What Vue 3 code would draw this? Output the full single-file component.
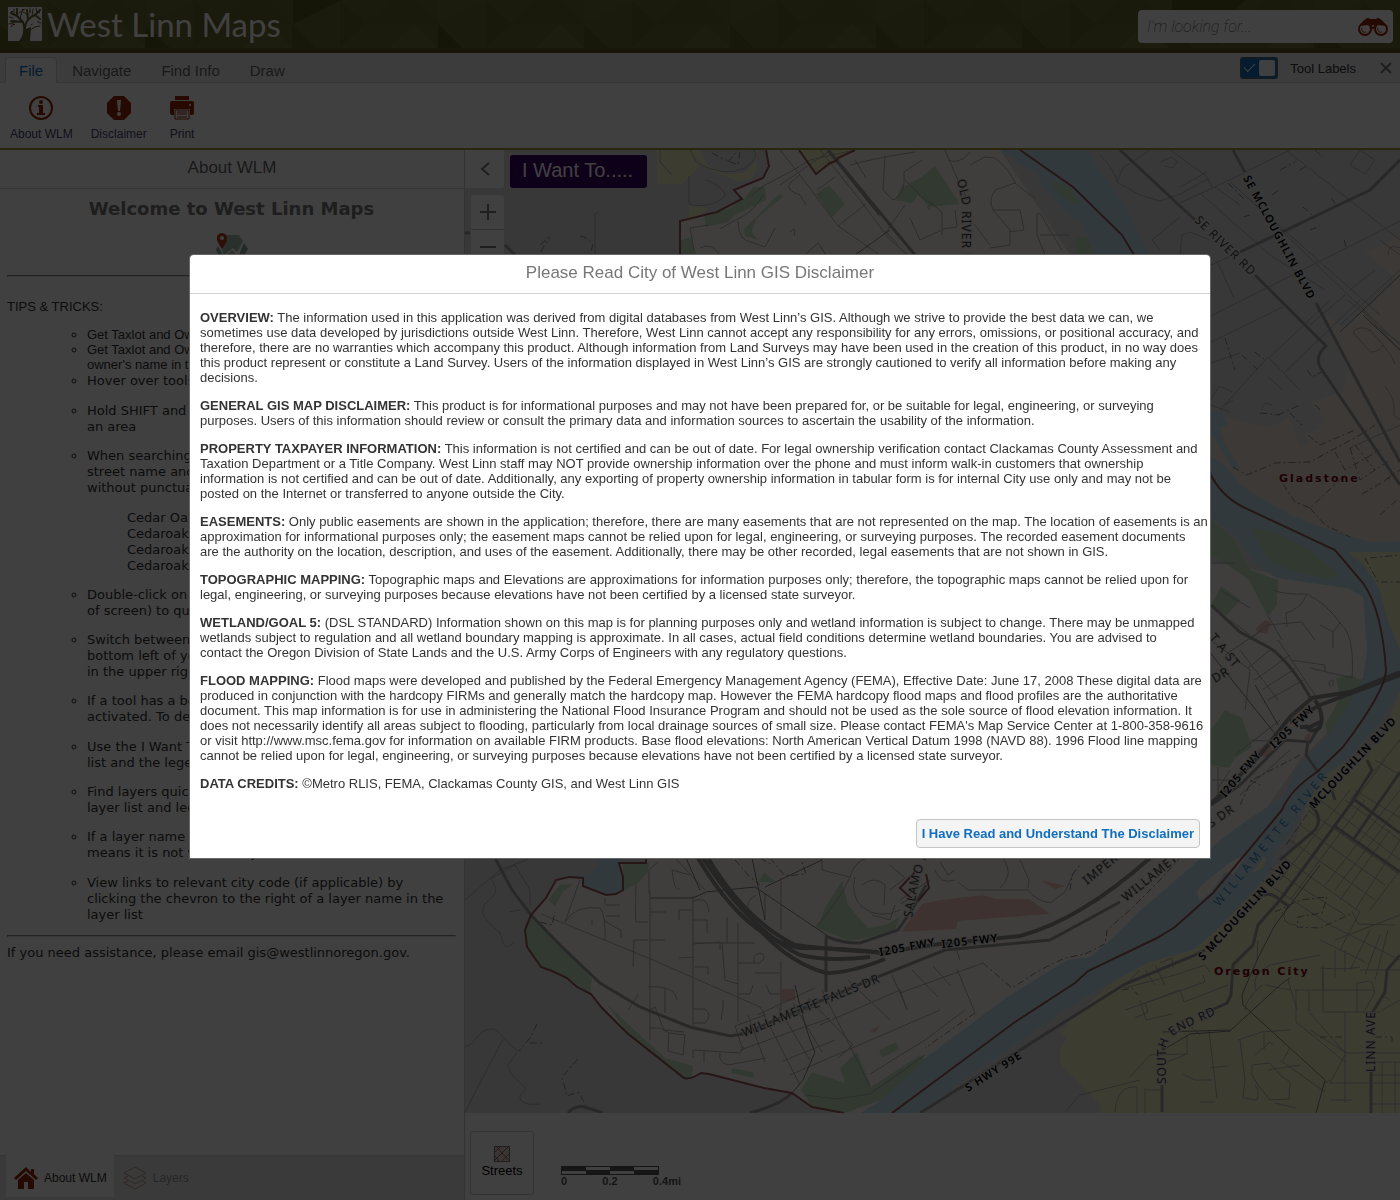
<script setup>
  import { ref } from 'vue'

  const searchText = ref('');
  const showLabels = ref(true);
  const showDisclaimer = ref(true);
  const activeTab = ref('File');

  const tabs = ['File', 'Navigate', 'Find Info', 'Draw'];

  // --------------> SIDE PANEL

  const tips = [
    {text: "Get Taxlot and Owner info", plain: true},
    {text: "Get Taxlot and Owner info by\nowner's name in the search", plain: true},
    {text: "Hover over tools for help", first: true},
    {text: "Hold SHIFT and drag to zoom\nan area", wide: true},
    {
      text: "When searching, use the\nstreet name and number\nwithout punctuation",
      examples: ["Cedar Oak", "Cedaroak", "Cedaroak Dr", "Cedaroak Drive"],
    },
    {text: "Double-click on the map (top\nof screen) to query"},
    {text: "Switch between tabs at the\nbottom left of your screen\nin the upper right"},
    {text: "If a tool has a border it is\nactivated. To deselect, click"},
    {text: "Use the I Want To menu for the layer\nlist and the legend", wide: true},
    {text: "Find layers quickly with the\nlayer list and legend"},
    {text: "If a layer name is gray, this\nmeans it is not visible at your scale"},
    {text: "View links to relevant city code (if applicable) by\nclicking the chevron to the right of a layer name in the\nlayer list", wide: true},
  ];

  // --------------> DISCLAIMER

  const sections = [
    {title: "OVERVIEW:", text: "The information used in this application was derived from digital databases from West Linn’s GIS. Although we strive to provide the best data we can, we sometimes use data developed by jurisdictions outside West Linn. Therefore, West Linn cannot accept any responsibility for any errors, omissions, or positional accuracy, and therefore, there are no warranties which accompany this product. Although information from Land Surveys may have been used in the creation of this product, in no way does this product represent or constitute a Land Survey. Users of the information displayed in West Linn’s GIS are strongly cautioned to verify all information before making any decisions."},
    {title: "GENERAL GIS MAP DISCLAIMER:", text: "This product is for informational purposes and may not have been prepared for, or be suitable for legal, engineering, or surveying\npurposes. Users of this information should review or consult the primary data and information sources to ascertain the usability of the information."},
    {title: "PROPERTY TAXPAYER INFORMATION:", text: "This information is not certified and can be out of date. For legal ownership verification contact Clackamas County Assessment and Taxation Department or a Title Company. West Linn staff may NOT provide ownership information over the phone and must inform walk-in customers that ownership\ninformation is not certified and can be out of date. Additionally, any exporting of property ownership information in tabular form is for internal City use only and may not be\nposted on the Internet or transferred to anyone outside the City."},
    {title: "EASEMENTS:", text: "Only public easements are shown in the application; therefore, there are many easements that are not represented on the map. The location of easements is an approximation for informational purposes only; the easement maps cannot be relied upon for legal, engineering, or surveying purposes. The recorded easement documents\nare the authority on the location, description, and uses of the easement. Additionally, there may be other recorded, legal easements that are not shown in GIS."},
    {title: "TOPOGRAPHIC MAPPING:", text: "Topographic maps and Elevations are approximations for information purposes only; therefore, the topographic maps cannot be relied upon for legal, engineering, or surveying purposes because elevations have not been certified by a licensed state surveyor."},
    {title: "WETLAND/GOAL 5:", text: "(DSL STANDARD) Information shown on this map is for planning purposes only and wetland information is subject to change. There may be unmapped wetlands subject to regulation and all wetland boundary mapping is approximate. In all cases, actual field conditions determine wetland boundaries. You are advised to\ncontact the Oregon Division of State Lands and the U.S. Army Corps of Engineers with any regulatory questions."},
    {title: "FLOOD MAPPING:", text: "Flood maps were developed and published by the Federal Emergency Management Agency (FEMA), Effective Date: June 17, 2008 These digital data are produced in conjunction with the hardcopy FIRMs and generally match the hardcopy map. However the FEMA hardcopy flood maps and flood profiles are the authoritative document. This map information is for use in administering the National Flood Insurance Program and should not be used as the sole source of flood elevation information. It does not necessarily identify all areas subject to flooding, particularly from local drainage sources of small size. Please contact FEMA's Map Service Center at 1-800-358-9616 or visit http://www.msc.fema.gov for information on available FIRM products. Base flood elevations: North American Vertical Datum 1998 (NAVD 88). 1996 Flood line mapping cannot be relied upon for legal, engineering, or surveying purposes because elevations have not been certified by a licensed state surveyor."},
    {title: "DATA CREDITS:", text: "©Metro RLIS, FEMA, Clackamas County GIS, and West Linn GIS"},
  ];

  // --------------> MAP

  const areas = [
    {kind: "city", d: "M766 150L769 166 763 178 734 190 742 199 717 212 680 221V600L646 858V863H619L623 877V890L606 895 583 886V878L569 877 556 880 546 898 531 915 525 930 527 947 541 967 567 978 591 994 627 1033 684 1078 692 1078 701 1073 764 1088 792 1093 812 1107 844 1113H880L1230 860 1300 760 1370 690 1367 590 1200 560 1100 300 1000 150Z"},
    {kind: "gladstone", d: "M1400 237L1365 252 1397 280 1367 310 1343 327 1323 313 1337 340 1347 367 1343 390 1310 404 1325 418 1318 430 1305 434 1308 445 1300 447 1290 417 1270 427 1247 423 1210 413V500L1400 552Z"},
    {kind: "oregon", d: "M1400 690L1382 740 1350 760 1328 773 1307 803 1293 850 1217 930 1193 950 1147 955 1120 975 1060 1031 1067 1038 1060 1050V1063L1102 1107 1100 1113H1400Z"},
    {kind: "oregon", d: "M682 150H694L700 166 682 184H657V150ZM692 150H757V168L752 178 740 182 726 176 705 168Z"},
    {kind: "oregon", d: "M690 206L708 208 703 214 688 218ZM800 150H850L838 162 817 173Z"},
    {kind: "city", d: "M700 150H756L757 162 744 173 727 174 708 166Z", cls: "gray"},
    {kind: "water", d: "M1000 150L1035 172 1043 188 1058 205 1070 216 1082 222 1096 255 1140 400 1210 517 1235 535 1256 565 1277 578 1310 583 1347 588 1363 597 1367 650 1363 677 1343 713 1327 737 1297 767 1283 797 1250 818 1220 840 1193 865 1143 908 1107 943 1090 957 1067 960 1007 997 925 1058 881 1100 861 1113H920L967 1077 1023 1040 1060 1013 1097 990 1120 978 1147 963 1193 950 1217 930 1257 887 1272 868 1274 852 1293 830 1307 803 1328 773 1350 757 1382 720 1400 690V541L1370 542 1330 530 1290 515 1240 485 1225 465 1210 455 1150 254 1137 231 1127 208 1113 188 1097 168 1087 150Z"},
    {kind: "oregon", d: "M1348 552H1400V650L1388 620 1380 590 1365 566Z"},
    {kind: "water", d: "M1210 413L1222 413 1228 424 1220 428 1225 445 1240 467 1233 470 1210 430Z"},
    {kind: "water", d: "M556 880L569 877 583 878V886L606 895 616 894 623 889 619 863 622 858H592L598 866 588 874Z"},
    {kind: "park", d: "M1250 527L1275 532 1310 550 1340 575 1325 579 1290 570 1270 561Z"},
    {kind: "park", d: "M1050 180L1068 186 1082 203 1075 205 1058 194ZM1074 237H1087L1096 255H1077Z"},
    {kind: "park", d: "M1210 518L1235 540 1250 570 1278 580 1277 605 1268 617 1249 580 1238 572 1210 553Z"},
    {kind: "park", d: "M1221 586L1241 600 1226 616 1211 605ZM1210 731L1225 710 1242 718 1252 747 1235 758 1229 768 1210 765Z"},
    {kind: "park", d: "M1336 678L1350 675 1362 680 1345 712 1328 737 1325 725 1340 698Z"},
    {kind: "park", d: "M704 217L730 208 745 198 753 187 765 187 766 200 735 215 728 222 706 227ZM780 193L783 197 756 219 752 232 758 240 745 236 744 229Z"},
    {kind: "park", d: "M829 185L845 204 832 217 816 194ZM895 200L901 188 920 178 935 166 960 204 930 207 918 195 912 203ZM681 240L690 237 697 255H681Z"},
    {kind: "park", d: "M531 915L560 945 592 979 590 993 567 978 541 967 527 947 525 930ZM623 864L649 863 648 872 637 884 622 892Z"},
    {kind: "park", d: "M548 900L560 885 573 884 563 892 555 906ZM606 1003L640 1035 665 1058 693 1066 692 1078 684 1078 627 1033Z"},
    {kind: "park", d: "M842 881L848 905 868 928 885 925 900 917 895 930 870 937 850 941 817 928 826 906ZM758 882L764 872 776 882Z"},
    {kind: "park", d: "M801 1090L812 1072 845 1083 840 1068 857 1052 871 1087 920 1055 926 1060 881 1100 845 1113 812 1107ZM879 1050L896 1042 899 1049 882 1058ZM732 1068L753 1072 755 1078 731 1073Z"},
    {kind: "red", d: "M901 932L922 904 940 900 982 895 996 899H1030L1036 904 1050 914 958 921 956 929ZM1255 752L1270 740 1272 752 1268 759 1257 753Z"},
    {kind: "red", d: "M782 989H795V1000L782 1002ZM1256 628L1265 620 1271 623 1267 634 1257 632ZM1306 735L1311 732 1309 740 1304 740ZM870 1031L880 1025 875 1033ZM1040 880L1066 886 1055 889Z"},
    {kind: "city", d: "M1197 892L1202 885 1228 864 1238 858 1245 858 1233 874 1225 872 1212 891 1200 901Z"},
    {kind: "oregon", d: "M1252 873L1263 858 1266 858 1264 867Z"},
  ];

  const minorRoads = [
    // hills west of the city
    "M465 900L500 870 531 858", "M490 877C500 893 496 893 485 904C478 918 490 922 500 933C504 945 505 952 514 942M509 912L520 910",
    "M492 878L515 865 530 890V906", "M465 1047C475 1045 478 1030 490 1029C500 1028 500 1038 518 1051L508 1065C510 1080 528 1085 525 1090C515 1098 520 1106 540 1104",
    "M503 1039L465 1112", "M595 255V214L598 212",
    // north side
    "M690 150L697 163Q725 178 745 168Q760 158 754 150", "M660 150V162L672 175M705 180C715 182 725 190 725 196C718 204 700 208 689 204V176",
    "M708 225L690 228 694 250M720 229Q735 220 740 218Q755 210 763 195M738 221Q738 235 745 240L765 247",
    "M750 197L763 186L790 172 810 160 855 150", "M780 150L800 175 838 226 880 255", "M800 175L790 183Q785 190 800 195L806 205",
    "M820 150L860 200 890 240 908 255", "M780 185L828 152M817 190L835 177M838 226L866 204M850 165Q880 157 915 152",
    "M855 160L866 178M885 155L883 190L893 200Q906 195 904 172L922 160",
    "M930 210Q925 206 932 204L942 212V235M905 205L886 232 898 245M910 218L920 240 942 230M765 247L775 228",
    "M700 248Q712 242 720 255M790 232Q797 225 794 236M805 255L818 243 826 255",
    "M905 180Q920 195 925 200L935 205M955 210L957 227 942 229",
    "M945 150L960 185 968 200M948 160Q960 165 970 152M970 165L985 157 995 158Q1010 170 1015 183M1015 183L995 190Q988 200 993 210L1010 230V245L990 248M993 210L1020 210 1024 230 1009 232M1015 183L1030 195 1036 198M1037 214Q1040 210 1045 222L1062 250M1040 235H1070M1037 214V235L1045 255M975 225L990 245",
    "M1100 155Q1115 170 1117 182L1140 195 1160 201 1180 194 1210 178M1117 182L1123 168 1150 150M1207 172L1180 187M1180 203L1215 187 1300 145",
    "M1160 162L1172 157 1178 162 1172 168 1164 166M1170 150L1205 175 1213 188M1286 150L1400 240M1200 193L1270 255M1350 165L1360 150 1375 160 1365 174ZM1215 187L1240 205",
    "M1160 250L1152 240 1180 217M1180 255L1182 235 1190 232 1210 240",
    // Gladstone
    "M1211 316L1400 221M1211 342L1283 307M1218 263L1234 298M1211 265L1300 225M1250 200L1400 345M1230 182L1380 315M1270 255L1325 290M1285 372L1360 300M1270 357L1330 300M1220 410L1268 357M1211 400L1219 386 1232 392M1268 357L1300 390M1225 405L1233 400M1262 410Q1262 400 1272 405",
    "M1211 363L1240 353M1268 377L1283 390M1211 405L1230 412M1310 325L1345 295M1400 270L1340 325M1350 290L1375 270M1348 300L1362 312M1353 332Q1358 325 1370 330L1383 345Q1380 352 1370 352Z M1383 345Q1392 355 1395 364M1400 425L1350 448M1385 386Q1396 400 1394 415L1400 420",
    "M1388 255Q1388 243 1400 248M1380 240L1400 255M1362 310L1400 350M1375 325L1400 343",
    // east city streets
    "M1211 563H1234M1273 590Q1285 595 1307 594Q1328 605 1340 623Q1355 635 1352 678L1310 668M1307 594Q1300 610 1286 613L1287 627M1250 640L1267 625 1302 622 1315 640M1320 625L1333 632 1340 623M1333 632V648M1211 640L1250 670 1245 710M1220 590L1250 608M1230 620L1250 635M1268 616L1282 640",
    "M1240 650L1278 700M1225 655L1262 630M1248 668L1270 650M1255 680L1290 655M1262 690L1296 668M1268 700L1303 680M1278 640L1315 695M1290 660L1325 665V672M1330 687Q1327 680 1333 680V686",
    "M1218 767V795M1230 770L1217 790M1212 780H1240M1235 755L1280 720M1250 740L1285 742M1240 795L1290 750",
    // Willamette neighbourhood
    "M541 914L585 932 653 960 760 1007 765 1015 735 1026", "M565 922Q575 905 600 908Q606 915 605 940M604 920Q615 928 621 930V938M605 905V898M606 905H620M606 916H620M565 922L580 880M592 925V920",
    "M650 890V1040M693 896V1025M738 923V1022M781 961V1010M650 912H666M679 958L693 957M693 944L720 942V950M650 940H665M694 943L755 943M738 963H760Q768 955 760 953Q752 955 754 963M755 973H780M738 994H750L753 985M781 994H770L766 985M722 943L725 980 738 984M727 943V917M693 920H707V933M679 920V910H692M636 885Q635 920 636 922H648M649 894V870L658 862M693 901Q708 895 709 912M695 967H708V975M648 987Q675 985 677 1000M665 988V1013M650 1010L655 1007 664 1030 684 1032M669 1033L685 1035 683 1055 668 1051ZM693 1009H705Q713 1015 705 1023H694M649 1028H660L669 1033M693 1050L740 1053 744 1047M693 1058V1050M704 1050V1063M720 1053Q718 1062 728 1065L766 1058M721 1020L723 1007V1000M628 1010L638 995M634 940H648M634 940L633 967",
    "M765 893V920M756 895Q745 900 748 915M672 870Q675 895 680 888M672 870L690 875M675 858L705 890",
    "M781 878V930M822 858V870L850 877M850 877Q840 900 815 928M850 877Q855 860 868 858M855 877Q850 895 862 907Q880 920 900 910M862 885Q875 875 885 885L884 905M890 890L905 878 890 865M872 915L890 920 895 905",
    // Willamette Falls grid
    "M735 1026L743 1050M748 1015L765 1062M763 1013L800 1085M778 1007L810 1060M793 1003L822 1052M808 998L853 1045L838 1058M822 990L870 1086M848 980L890 1020M892 975L907 1009M912 970L938 997M933 966L950 985",
    "M735 1035L820 1005M740 1050L830 1018M783 1061L835 1040M790 1075L940 1010M820 1025L900 990M870 1074L925 1040 965 1010M805 1095L836 1099 870 1094 925 1055M757 1015L815 988",
    "M975 1013L957 969M955 945L960 960M900 993L983 963M900 990L907 1010",
    "M900 900L930 880M958 882L968 890H1028Q1035 900 1050 903M1003 858Q1015 875 1000 888M1020 860L1029 880 1028 888M940 862L948 875 955 870M1050 903L1065 892M935 870Q940 885 955 880M1065 892L1075 870M913 896L901 904",
    "M1065 1112L1080 1095 1140 1080",
    // Oregon City grid
    "M1320 800L1400 860M1310 812L1400 875M1300 825L1385 885M1290 840L1375 900M1280 855L1360 912M1270 868L1345 915M1262 880L1330 925M1355 790L1400 818M1345 800L1400 840M1375 760L1400 775",
    "M1400 790L1325 885M1400 805L1335 890M1400 740L1350 800M1400 840L1355 910M1385 760L1310 860M1390 830L1340 900M1365 800L1290 900M1350 790L1280 880M1400 870L1370 910",
    "M1285 910Q1280 925 1297 925M1352 911L1358 924 1395 925M1330 925L1400 960M1340 950L1360 912M1320 940L1365 962M1350 970L1370 930M1365 975L1380 935M1375 980L1388 930M1335 940L1400 915",
    "M1124 988L1175 975 1205 965 1210 972M1145 970L1155 985M1155 965L1165 985M1160 963L1172 958 1173 968M1130 980L1140 970M1125 1010L1205 982 1203 975M1135 1018L1148 1012 1145 1003 1180 990 1184 1002 1228 985M1140 1000L1146 1020 1172 1014",
    "M1323 990V967M1323 965V1012H1380M1335 950V978M1345 950V972M1360 970H1400M1320 968Q1345 970 1360 967M1296 1012V1022L1345 1062M1310 1013L1345 1053V1103M1295 990H1375M1309 991V1012M1357 1012V983L1370 981Q1378 990 1372 998L1365 1010M1345 1053H1400M1345 1012V1053M1330 1083L1345 1055M1265 985L1290 990M1296 1012V990",
    "M1238 1040L1262 1032 1290 1030M1240 1040L1245 1080 1243 1098 1257 1100Q1260 1090 1255 1085M1264 1033V1050M1252 1075V1065L1270 1063 1280 1075 1290 1082 1289 1099 1270 1100 1258 1085ZM1255 1055L1270 1042 1273 1045M1268 1070L1300 1065M1280 1060L1325 1092M1290 1048L1283 1060M1209 1031L1217 1098M1210 1068L1228 1066M1183 1074L1195 1080H1212M1200 1102H1215M1296 1108L1275 1103M1115 1112Q1117 1085 1137 1087V1113M1145 1088V1113M1145 1090H1161M1325 1083L1330 1080M1130 1077L1150 1055 1187 1054V1035M1165 1063L1187 1054M1330 1100H1352M1200 1035L1190 1026",
    "M1382 1062V1113M1395 1062V1113M1370 1062H1400M1370 1075H1400M1370 1104H1400M1390 1000Q1380 990 1373 1012M1382 1010L1400 1000M1330 1083H1400M1310 1030L1345 1052",
    "M1256 990Q1250 975 1270 965L1320 955M1257 960L1258 940M1262 985Q1245 1000 1245 1010M1288 980L1297 1010",
  ];

  const dashedRoads = [
    "M540 245L550 236M580 236Q595 240 592 248L590 255M541 252Q545 243 550 238", "M537 1024L530 1038 519 1051M530 1043H543M578 1059L562 1077 567 1096 578 1092 586 1105",
    "M540 922L552 925 555 912", "M712 153L725 160M740 152L738 165 726 160M728 162L738 150", "M1233 467L1247 475 1275 463 1310 462 1360 435 1375 425M1290 413L1302 425M1308 435L1320 445 1355 430M1335 452L1345 470 1380 450M1283 484L1295 502 1310 508 1345 475M1310 508L1325 525 1350 537M1385 480L1400 470M1362 494L1390 478M1380 515L1397 500",
    "M1225 338L1235 370M1242 355L1258 370M1255 352L1265 360M1307 370L1312 377 1325 370M1315 405L1322 412M1260 413L1280 415M1278 415L1300 405", "M1365 558L1378 582 1400 582M1370 558L1400 555M1350 448L1360 480 1390 460M1355 445L1375 470",
    "M1240 805L1252 780 1300 755M1250 780L1260 785M1286 845L1310 810", "M735 860L748 875 760 885M770 858L785 876 806 874 802 862M760 858L772 865",
    "M983 963L1012 988 1040 970 1065 958 1085 954 1105 944 1107 930 1130 910 1160 880 1180 858", "M1070 890L1072 875 1080 865M975 1013L925 1048",
    "M1275 912L1300 900 1327 897 1322 913 1298 917 1297 927 1320 928 1353 913", "M1122 990L1132 988 1138 995M1320 1037H1345M1375 1037H1392V1042M1290 905L1280 915",
    "M1280 170L1295 162M1228 183L1245 200M1250 215L1240 218M1300 170L1308 165M1272 195L1279 190M1303 207L1312 215M1331 198L1337 206M1315 150L1323 157M1310 230L1320 226M1344 240L1347 250",
  ];

  const mediumRoads = [
    "M650 898H693L706 892 755 887 828 936", "M765 920L752 858M700 890L686 858", "M1200 640L1280 740M1255 685L1278 725", "M795 985Q805 1030 815 1052L803 1080 792 1093",
    "M1163 1032L1231 1030 1280 985 1290 978M1243 1005L1325 1080 1316 1113M1242 995Q1250 975 1262 950L1275 925 1320 865M1243 1005L1242 995", "M822 860L765 887M855 255L890 230M1340 332L1400 275M1363 315L1400 350", "M1163 1050L1190 1034 1231 1031",
  ];

  const majorRoads = [
    "M495 858L512 890 531 915 560 945 600 983 640 1007 690 1027 730 1036 743 1034", "M828 150L830 152L915 255M828 150L880 215",
    "M1120 150L1195 220M1255 275L1326 346Q1315 355 1320 367L1400 485", "M1233 150L1245 172M1316 303L1400 462", "M1240 252L1370 190 1400 160",
    "M743 1034L870 980 945 950 1050 940 1120 902", "M920 1113L1125 984 1193 956 1205 950", "M825 936Q845 944 860 943L898 930 915 905 926 885", "M826 938V992",
    "M1162 1112V1085M1163 1050V1040M1205 1013L1227 1003 1231 995 1233 965 1253 945 1258 925 1280 900 1350 805 1372 770 1367 760M1280 860L1315 830Q1322 820 1315 810L1310 805M1355 800L1400 833M1333 825L1400 872M1353 840L1400 772M1258 897Q1270 890 1280 900L1290 907",
    "M1371 1113V1070M1371 1015L1385 992 1387 970 1400 955", "M1211 605L1240 632 1270 648Q1290 662 1310 697", "M1211 805L1240 785 1270 755 1285 740 1310 742 1320 725M1308 742L1306 755 1318 772M1335 800L1330 785M465 233H470M505 245L515 255M568 1113Q575 1105 585 1107L603 1113M750 1113Q780 1105 792 1093",
  ];

  const highways = [
    "M698 858Q745 938 800 948Q850 948 880 953L940 944 1020 936Q1080 920 1150 858",
    "M703 858Q750 930 800 955Q830 962 870 957", "M708 858Q745 920 795 945Q845 951 878 952", "M760 930Q790 963 826 973Q850 973 885 959",
    "M1211 804L1260 755 1290 717 1312 698 1350 692 1400 672", "M1290 722L1320 705 1400 675M1300 727H1310L1320 722M1315 700Q1325 715 1320 727 1312 735 1305 725",
  ];

  const roadLabels = [
    {id: "r1", d: "M1243 178L1325 330", text: "SE MCLOUGHLIN BLVD", dark: true},
    {id: "r2", d: "M1194 221L1262 287", text: "SE RIVER RD"},
    {id: "r3", d: "M957 180L962 202 962 290", text: "OLD RIVER DR"},
    {id: "r4", d: "M1209 638L1244 680", text: "T A ST"},
    {id: "r5", d: "M1215 683L1250 662", text: "DR"},
    {id: "r6", d: "M1274 749L1325 701", text: "I205 FWY", dark: true},
    {id: "r7", d: "M1225 798L1274 741", text: "I205 FWY", dark: true},
    {id: "r8", d: "M1211 828L1250 800", text: "S DR"},
    {id: "r9", d: "M1314 809L1420 697", text: "MCLOUGHLIN BLVD", dark: true},
    {id: "r10", d: "M1203 961L1305 850", text: "S MCLOUGHLIN BLVD", dark: true},
    {id: "r11", d: "M880 956L950 943", text: "I205 FWY", dark: true},
    {id: "r12", d: "M942 948L1012 940", text: "I205 FWY", dark: true},
    {id: "r13", d: "M744 1037L890 978", text: "WILLAMETTE FALLS DR"},
    {id: "r14", d: "M912 918L919 880 938 820", text: "SALAMO RD"},
    {id: "r15", d: "M1087 885L1155 830", text: "IMPERIAL"},
    {id: "r16", d: "M1126 902L1210 834", text: "WILLAMETTE"},
    {id: "r17", d: "M968 1092L1036 1049", text: "S HWY 99E", dark: true},
    {id: "r18", d: "M1166 1084V1050Q1167 1038 1180 1031L1225 1010", text: "SOUTH END RD"},
    {id: "r19", d: "M1375 1072V1000", text: "LINN AVE"},
  ];
</script>

<template>
  <div class="viewer">
    <header class="banner">
      <svg class="bannerPattern" aria-hidden="true">
        <defs>
          <pattern id="tri" width="146" height="48" patternUnits="userSpaceOnUse">
            <rect width="146" height="48" fill="#686b32" />
            <path d="M0 0H48L0 24Z" fill="#6c7036" />
            <path d="M48 0L73 24 48 48Z" fill="#62652e" />
            <path d="M73 24L98 0H122L146 24Z" fill="#64672f" />
            <path d="M98 48L122 24 146 48Z" fill="#707438" />
            <path d="M0 24L24 48H0Z" fill="#5e612b" />
          </pattern>
        </defs>
        <rect width="100%" height="100%" fill="url(#tri)" />
        <path d="M293 0H341L293 24ZM438 24L462 48H438ZM145 30L170 48H145ZM1172 0H1245L1220 24H1172ZM1318 24L1342 48H1318Z" fill="#545722" />
      </svg>
      <div class="brand">
        <svg class="brandLogo" viewBox="0 0 34 34" aria-hidden="true">
          <rect width="34" height="34" fill="#fff" />
          <g fill="none" stroke="#626630" stroke-linecap="round">
            <path d="M14 34C17 26 17 20 15 15L9 9M15 15L3 14M17 20C18 14 20 11 27 8M20 13L19 3M9 9L9 2M9 9L3 6M27 8L32 3M27 8L32 12" stroke-width="2" />
            <path d="M20 34C20 25 22 20 32 19M12 12L14 4M6 14L3 20M15 5L21 8M24 9L25 2M23 18L28 14 33 16M6 7L6 2M11 6L17 2M29 6L28 1M1 10L5 11M1 17L8 15M22 6L22 1" stroke-width="1" />
          </g>
          <path d="M11 34C16 28 16 23 15 17L18 19V34ZM18 34V22L23 20 22 34Z" fill="#626630" />
          <path d="M3 4h2v1h-2zM14 2h2v1h-2zM8 6h2v1h-2zM21 4h2v1h-2zM30 5h2v1h-2zM5 17h2v1h-2z" fill="#c02040" />
          <circle cx="26" cy="14" r="3" fill="#fff" />
        </svg>
        <span class="brandName">West Linn Maps</span>
      </div>
      <form class="search" @submit.prevent>
        <input v-model="searchText" type="text" placeholder="I'm looking for..." aria-label="Search" />
        <button type="submit" aria-label="Find">
          <svg width="30" height="20" viewBox="0 0 30 20">
            <path d="M2 9Q5 3 8 2Q10 0 12 2H18Q20 0 22 2Q25 3 28 9L20 8 17 7H13L10 8Z" fill="#962808" />
            <g fill="none" stroke="#962808" stroke-width="2">
              <circle cx="7" cy="12" r="6" /><circle cx="23" cy="12" r="6" />
              <path d="M4 11A3 3 0 0 0 8 15M20 11A3 3 0 0 0 24 15" stroke-width="1" />
            </g>
            <circle cx="15" cy="9" r="3" fill="#962808" /><circle cx="15" cy="9" r="1" fill="#fff" />
          </svg>
        </button>
      </form>
    </header>

    <nav class="tabs">
      <button v-for="tab in tabs" :key="tab" type="button" class="tab" :class="{ active: tab === activeTab }" @click="activeTab = tab">
        {{ tab }}
      </button>
      <label class="labelToggle">
        <input v-model="showLabels" type="checkbox" />
        Tool Labels
      </label>
      <button type="button" class="closeBtn" aria-label="Close toolbar">
        <svg width="12" height="12" viewBox="0 0 12 12"><path d="M1 1L11 11M11 1L1 11" stroke="#777" stroke-width="2" /></svg>
      </button>
    </nav>

    <div class="toolbar">
      <button type="button" class="tool">
        <svg width="24" height="24" viewBox="0 0 24 24">
          <circle cx="12" cy="12" r="11" fill="none" stroke="#962808" stroke-width="2" />
          <circle cx="12" cy="6" r="2" fill="#962808" />
          <path d="M9 9H14V17H16V19H8V17H10V11H9Z" fill="#962808" />
        </svg>
        <span v-if="showLabels">About WLM</span>
      </button>
      <button type="button" class="tool" @click="showDisclaimer = true">
        <svg width="24" height="24" viewBox="0 0 24 24">
          <path d="M7 0H17L24 7V17L17 24H7L0 17V7Z" fill="#962808" />
          <path d="M10 4H14L13 15H11Z" fill="#fff" /><circle cx="12" cy="18" r="2" fill="#fff" />
        </svg>
        <span v-if="showLabels">Disclaimer</span>
      </button>
      <button type="button" class="tool">
        <svg width="24" height="24" viewBox="0 0 24 24">
          <path d="M5 0H19V4H5ZM2 5H22Q24 5 24 7V17Q24 19 22 19H20V13H4V19H2Q0 19 0 17V7Q0 5 2 5Z" fill="#962808" />
          <path d="M5 14H19V23H5Z" fill="#fff" stroke="#962808" stroke-width="1" />
          <path d="M7 16H17M7 18H17M7 21H17" stroke="#962808" stroke-width="1" />
          <circle cx="20" cy="9" r="1" fill="#fff" />
        </svg>
        <span v-if="showLabels">Print</span>
      </button>
    </div>

    <main class="workspace">
      <aside class="panel">
        <h2 class="panelTitle">About WLM</h2>
        <div class="panelBody">
          <h1>Welcome to West Linn Maps</h1>
          <svg class="welcomeIcon" width="32" height="32" viewBox="0 0 32 32" aria-hidden="true">
            <path d="M10 2H23L27 8 21 19 17 15 12 19 8 22 6 17Z" fill="#a8c0b0" />
            <path d="M28 10L32 16 25 29H20ZM2 13L8 24 12 30H7L0 17Z" fill="#88a898" />
            <path d="M11 22L16 17 21 22 24 29H9Z" fill="#b8c8bc" />
            <path d="M6 0A5 5 0 0 1 11 6Q11 9 6 16Q1 9 1 6A5 5 0 0 1 6 0Z" fill="#b84020" />
            <circle cx="6" cy="5" r="2" fill="#fff" />
          </svg>
          <hr />
          <p class="tipsTitle">TIPS &amp; TRICKS:</p>
          <ul class="tips">
            <li v-for="(tip, index) in tips" :key="index" :class="{ plain: tip.plain, first: tip.first, wide: tip.wide }">
              <span class="lines">{{ tip.text }}</span>
              <div v-if="tip.examples" class="examples">
                <div v-for="example in tip.examples" :key="example">{{ example }}</div>
              </div>
            </li>
          </ul>
          <hr class="lastRule" />
          <p class="assist">If you need assistance, please email gis@westlinnoregon.gov.</p>
        </div>
        <div class="panelTabs">
          <button type="button" class="panelTab active">
            <svg width="24" height="24" viewBox="0 0 24 24">
              <path d="M0 12L12 1 17 6V3H20V8L24 12 22 14 12 5 2 14Z" fill="#962808" />
              <path d="M4 14L12 7 20 14V23H14V16H10V23H4Z" fill="#962808" />
            </svg>
            About WLM
          </button>
          <button type="button" class="panelTab">
            <svg width="24" height="24" viewBox="0 0 24 24" fill="none" stroke="#b89888" stroke-width="1">
              <path d="M12 1L23 7 12 13 1 7Z" />
              <path d="M5 10L1 12 12 18 23 12 19 10M5 15L1 17 12 23 23 17 19 15" />
            </svg>
            Layers
          </button>
        </div>
      </aside>

      <section class="mapPane">
        <div class="mapBox">
          <svg class="map" viewBox="465 150 935 963" preserveAspectRatio="xMinYMin slice">
            <rect x="465" y="150" width="935" height="963" fill="#e0e0e0" />
            <path v-for="(area, index) in areas" :key="index" :d="area.d" :class="[area.kind, area.cls]" />
            <path v-for="road in minorRoads" :key="road" :d="road" class="road minor" />
            <path v-for="road in dashedRoads" :key="road" :d="road" class="road dashed" />
            <path v-for="road in mediumRoads" :key="road" :d="road" class="road medium" />
            <path v-for="road in majorRoads" :key="road" :d="road" class="road major" />
            <path v-for="road in highways" :key="road" :d="road" class="road highway" />
            <path class="limit" d="M766 150L769 166 763 178 734 190 742 199 717 212 680 221V858M799 150L816 174 830 163 836 161 838 158 855 150M646 858V863H619L623 877V890L616 894 606 895 583 886V878L569 877 556 880 546 898 531 915 525 930 527 947 541 967 552 971 567 978 577 987 591 994 602 1008 627 1033 684 1078Q690 1080 701 1073L709 1074 764 1088 792 1093 812 1107 844 1113M915 872L900 888 912 899M926 874L929 888 918 901" />
            <path class="limit" d="M1020 150L1073 187 1122 235 1134 255 1210 473Q1220 495 1243 507L1335 550 1363 583Q1382 610 1386 670Q1386 690 1343 747L1317 772Q1290 790 1282 810L1213 893 1175 927 1157 938 1088 971 1075 983 1015 1022 892 1113" />
            <g v-for="label in roadLabels" :key="label.id">
              <path :id="label.id" :d="label.d" fill="none" />
              <text class="roadLabel" :class="{ dark: label.dark }"><textPath :href="'#' + label.id">{{ label.text }}</textPath></text>
            </g>
            <path id="river" d="M1219 907L1345 756" fill="none" />
            <text class="riverLabel"><textPath href="#river">WILLAMETTE RIVER</textPath></text>
            <text x="1279" y="482" class="cityLabel">Gladstone</text>
            <text x="1214" y="975" class="cityLabel">Oregon City</text>
          </svg>
          <div class="mapTop">
            <div class="mapButtons">
              <button type="button" class="collapse" aria-label="Collapse panel">
                <svg width="12" height="14" viewBox="0 0 12 14"><path d="M10 1L3 7 10 13" fill="none" stroke="#777" stroke-width="2" /></svg>
              </button>
              <div class="zoomBar">
                <button type="button" aria-label="Zoom in">
                  <svg width="16" height="16" viewBox="0 0 16 16"><path d="M0 8H16M8 0V16" stroke="#777" stroke-width="2" /></svg>
                </button>
                <button type="button" aria-label="Zoom out">
                  <svg width="16" height="16" viewBox="0 0 16 16"><path d="M0 8H16" stroke="#777" stroke-width="2" /></svg>
                </button>
              </div>
            </div>
            <button type="button" class="wantTo">I Want To.....</button>
          </div>
        </div>
        <footer class="mapFooter">
          <button type="button" class="basemap">
            <svg width="16" height="16" viewBox="0 0 16 16">
              <rect x="0" y="0" width="16" height="16" fill="#e8d8d0" stroke="#777" stroke-width="2" />
              <path d="M1 14L14 1M3 1L14 14M1 6L6 1M8 15L15 8M1 10L5 15" stroke="#a06058" stroke-width="1" fill="none" />
            </svg>
            Streets
          </button>
          <div class="scale">
            <svg width="98" height="9" viewBox="0 0 98 9">
              <rect width="98" height="9" fill="#555" />
              <path d="M1 5H25V8H1ZM25 1H49V4H25ZM49 5H73V8H49ZM73 1H97V4H73Z" fill="#fff" />
            </svg>
            <div class="scaleText"><span>0</span><span>0.2</span><span>0.4mi</span></div>
          </div>
        </footer>
      </section>
    </main>

    <div v-if="showDisclaimer" class="overlay">
      <div class="modal" role="dialog" aria-labelledby="disclaimerTitle">
        <h2 id="disclaimerTitle">Please Read City of West Linn GIS Disclaimer</h2>
        <div class="modalBody">
          <p v-for="section in sections" :key="section.title">
            <strong>{{ section.title }}</strong> <span class="lines">{{ section.text }}</span>
          </p>
        </div>
        <div class="modalActions">
          <button type="button" @click="showDisclaimer = false">I Have Read and Understand The Disclaimer</button>
        </div>
      </div>
    </div>
  </div>
</template>

<style>
  body {
    margin: 0;
  }
</style>

<style scoped>
  * {
    box-sizing: border-box;
  }

  .viewer {
    display: flex;
    flex-direction: column;
    min-height: 100vh;
    font-family: "Liberation Sans", Arial, sans-serif;
    font-size: 13px;
    color: #333;
    background-color: #fff;
  }

  button {
    font: inherit;
    color: inherit;
    padding: 0;
    border: none;
    background: none;
  }

  svg {
    display: block;
  }

  .lines {
    white-space: pre-line;
  }

  .banner {
    position: relative;
    display: flex;
    justify-content: space-between;
    align-items: center;
    height: 53px;
    padding: 0 7px 0 8px;
    border-bottom: 5px solid #645520;
  }

  .bannerPattern {
    position: absolute;
    inset: 0;
    width: 100%;
    height: 100%;
  }

  .brand {
    position: relative;
    display: flex;
    align-items: center;
    gap: 5px;
    color: #fff;
  }

  .brandLogo {
    width: 34px;
    height: 34px;
  }

  .brandName {
    font-family: Lato, sans-serif;
    font-size: 33px;
    line-height: 40px;
  }

  .search {
    position: relative;
    display: flex;
    align-items: center;
    width: 255px;
    height: 33px;
    margin-top: 5px;
    padding: 0 5px 0 9px;
    border-radius: 4px;
    background-color: #fff;
  }

  .search input {
    flex: 1;
    min-width: 0;
    padding: 0;
    border: none;
    outline: none;
    background: none;
    font-family: Roboto, sans-serif;
    font-size: 16px;
    font-style: italic;
    font-weight: 200;
  }

  .search input::placeholder {
    color: #777;
  }

  .tabs {
    display: flex;
    align-items: flex-end;
    height: 30px;
    padding: 0 8px 0 5px;
    border-bottom: 1px solid #d4d4d4;
    background-color: #f0f0f0;
  }

  .tab {
    height: 26px;
    margin-bottom: -1px;
    padding: 1px 14px 0;
    border: 1px solid transparent;
    font-size: 15px;
    color: #666;
  }

  .tab.active {
    padding: 1px 13px 0;
    border-color: #d4d4d4;
    border-bottom-color: #fff;
    border-radius: 4px 4px 0 0;
    background-color: #fff;
    color: #106ebe;
  }

  .labelToggle {
    display: flex;
    align-items: center;
    gap: 12px;
    height: 28px;
    margin-left: auto;
  }

  .labelToggle input {
    appearance: none;
    position: relative;
    width: 38px;
    height: 22px;
    margin: 0;
    border: 2px solid #4a6a88;
    border-radius: 3px;
    background-color: #106ebe;
  }

  .labelToggle input::before {
    content: "";
    position: absolute;
    top: 1px;
    right: 1px;
    width: 16px;
    height: 16px;
    border-radius: 2px;
    background-color: #fff;
  }

  .labelToggle input::after {
    content: "";
    position: absolute;
    top: 4px;
    left: 2px;
    width: 10px;
    height: 5px;
    border: solid #fff;
    border-width: 0 0 1px 1px;
    transform: rotate(-45deg);
  }

  .closeBtn {
    display: flex;
    align-items: center;
    height: 28px;
    margin-left: 24px;
  }

  .toolbar {
    display: flex;
    gap: 18px;
    height: 67px;
    padding: 13px 10px 0;
    border-bottom: 2px solid #a09a38;
    background-color: #fff;
  }

  .tool {
    display: flex;
    flex-direction: column;
    align-items: center;
    gap: 7px;
    font-size: 12px;
    line-height: 14px;
    color: #44446c;
  }

  .tool:last-child {
    margin-left: 5px;
  }

  .workspace {
    display: flex;
    flex: 1;
  }

  .panel {
    display: flex;
    flex-direction: column;
    flex: 0 0 465px;
    border-right: 1px solid #ccc;
  }

  .panelTitle {
    margin: 0;
    padding: 9px 0 11px;
    border-bottom: 1px solid #d4d4d4;
    font-size: 17px;
    font-weight: 400;
    line-height: 18px;
    text-align: center;
    color: #666;
  }

  .panelBody {
    flex: 1;
    padding: 9px 8px 0 7px;
    font-family: "DejaVu Sans", Verdana, sans-serif;
    line-height: 16px;
  }

  .panelBody h1 {
    margin: 0;
    font-size: 18px;
    line-height: 22px;
    text-align: center;
    color: #777;
  }

  .welcomeIcon {
    margin: 13px auto 10px;
  }

  hr {
    height: 2px;
    margin: 0;
    border: 1px solid;
    border-color: #888 #ddd #ddd #888;
  }

  .tipsTitle {
    margin: 22px 0 12px;
    font-family: "Liberation Sans", Arial, sans-serif;
  }

  .tips {
    margin: 0;
    padding-left: 80px;
    list-style: circle;
  }

  .tips li {
    margin-top: 13px;
  }

  .tips li.plain {
    margin-top: 0;
    font-family: "Liberation Sans", Arial, sans-serif;
    line-height: 15px;
  }

  .tips li.first {
    margin-top: 1px;
  }

  .tips li.wide {
    margin-top: 14px;
  }

  .examples {
    margin: 14px 0 0 40px;
  }

  .lastRule {
    margin-top: 12px;
  }

  .assist {
    margin: 8px 0 0;
  }

  .panelTabs {
    display: flex;
    height: 45px;
    padding: 0 6px 3px;
    border-top: 1px solid #d4d4d4;
    background-color: #e8e8e8;
  }

  .panelTab {
    display: flex;
    align-items: center;
    gap: 6px;
    margin-top: -1px;
    padding: 3px 9px 0;
    font-size: 12px;
    color: #999;
  }

  .panelTab.active {
    padding: 3px 7px 0 8px;
    background-color: #fff;
    color: #333;
  }

  .mapPane {
    display: flex;
    flex-direction: column;
    flex: 1;
    min-width: 0;
  }

  .mapBox {
    position: relative;
    flex: 1;
    overflow: hidden;
  }

  .map {
    position: absolute;
    inset: 0;
    width: 100%;
    height: 100%;
  }

  .city { fill: #fff8f0; }
  .city.gray { fill: #e0e0e0; }
  .gladstone { fill: #f0e4da; }
  .oregon { fill: #f4f0c4; }
  .water { fill: #c8e4f4; }
  .park { fill: #c4e4c4; }
  .red { fill: #f8c8c0; }

  .road {
    fill: none;
    stroke: #b0b0b0;
    stroke-width: 1px;
  }

  .road.dashed {
    stroke: #888;
    stroke-dasharray: 7 3 2 3;
  }

  .road.medium {
    stroke: #808080;
  }

  .road.major {
    stroke: #a0a0a0;
    stroke-width: 3px;
  }

  .road.highway {
    stroke: #949494;
    stroke-width: 4px;
  }

  .limit {
    fill: none;
    stroke: #985858;
    stroke-width: 2px;
  }

  .roadLabel,
  .riverLabel {
    font-family: "Noto Sans", sans-serif;
    font-size: 12px;
    letter-spacing: 1px;
    fill: #444;
    stroke: #e4e4e4;
    stroke-width: 2px;
    paint-order: stroke;
  }

  .roadLabel.dark {
    font-size: 11px;
    font-weight: 600;
    fill: #000;
  }

  .riverLabel {
    letter-spacing: 4px;
    fill: #3c8cc0;
    stroke: none;
  }

  .cityLabel {
    font-family: "DejaVu Sans", sans-serif;
    font-size: 11px;
    font-weight: 700;
    letter-spacing: 2px;
    fill: #780010;
  }

  .mapTop {
    position: absolute;
    top: 0;
    left: 0;
    display: flex;
    align-items: flex-start;
    gap: 6px;
  }

  .mapButtons {
    display: flex;
    flex-direction: column;
    align-items: flex-end;
    gap: 7px;
  }

  .collapse,
  .zoomBar button {
    display: flex;
    justify-content: center;
    align-items: center;
    background-color: #fff;
  }

  .collapse {
    width: 39px;
    height: 38px;
    border-radius: 0 0 3px 0;
  }

  .zoomBar {
    overflow: hidden;
    border-radius: 3px;
  }

  .zoomBar button {
    width: 33px;
    height: 34px;
  }

  .zoomBar button + button {
    border-top: 1px solid #ccc;
  }

  .wantTo {
    margin-top: 5px;
    height: 33px;
    padding: 0 14px 2px 12px;
    border-radius: 3px;
    background-color: #3c0068;
    font-size: 20px;
    color: #fff;
  }

  .mapFooter {
    display: flex;
    gap: 27px;
    padding: 18px 5px 5px;
  }

  .basemap {
    display: flex;
    flex-direction: column;
    align-items: center;
    justify-content: center;
    gap: 1px;
    width: 64px;
    height: 64px;
    padding-bottom: 2px;
    border: 1px solid #ccc;
    border-radius: 3px;
    color: #000;
  }

  .scale {
    padding-top: 35px;
  }

  .scaleText {
    display: flex;
    justify-content: space-between;
    width: 120px;
    font-size: 11px;
    font-weight: 700;
    line-height: 12px;
    color: #555;
  }

  .overlay {
    position: fixed;
    inset: 0;
    display: flex;
    justify-content: center;
    align-items: flex-start;
    padding: 255px 20px 20px;
    background-color: rgba(0, 0, 0, 0.75);
  }

  .modal {
    width: 1020px;
    max-width: 100%;
    border-radius: 4px 4px 0 0;
    background-color: #fff;
    box-shadow: 0 0 0 1px #666;
  }

  .modal h2 {
    margin: 0;
    padding: 9px 0 11px;
    border-bottom: 1px solid #d4d4d4;
    font-size: 17px;
    font-weight: 400;
    line-height: 18px;
    text-align: center;
    color: #777;
  }

  .modalBody {
    padding: 16px 0 28px 10px;
    line-height: 15px;
  }

  .modalBody p {
    margin: 0 0 13px;
  }

  .modalBody p:last-child {
    margin: 0;
  }

  .modalActions {
    display: flex;
    justify-content: flex-end;
    padding: 0 10px 10px;
  }

  .modalActions button {
    height: 29px;
    padding: 0 5px;
    border: 1px solid #c4c4c4;
    border-radius: 4px;
    background-color: #f4f4f4;
    font-weight: 700;
    color: #106ebe;
  }
</style>
